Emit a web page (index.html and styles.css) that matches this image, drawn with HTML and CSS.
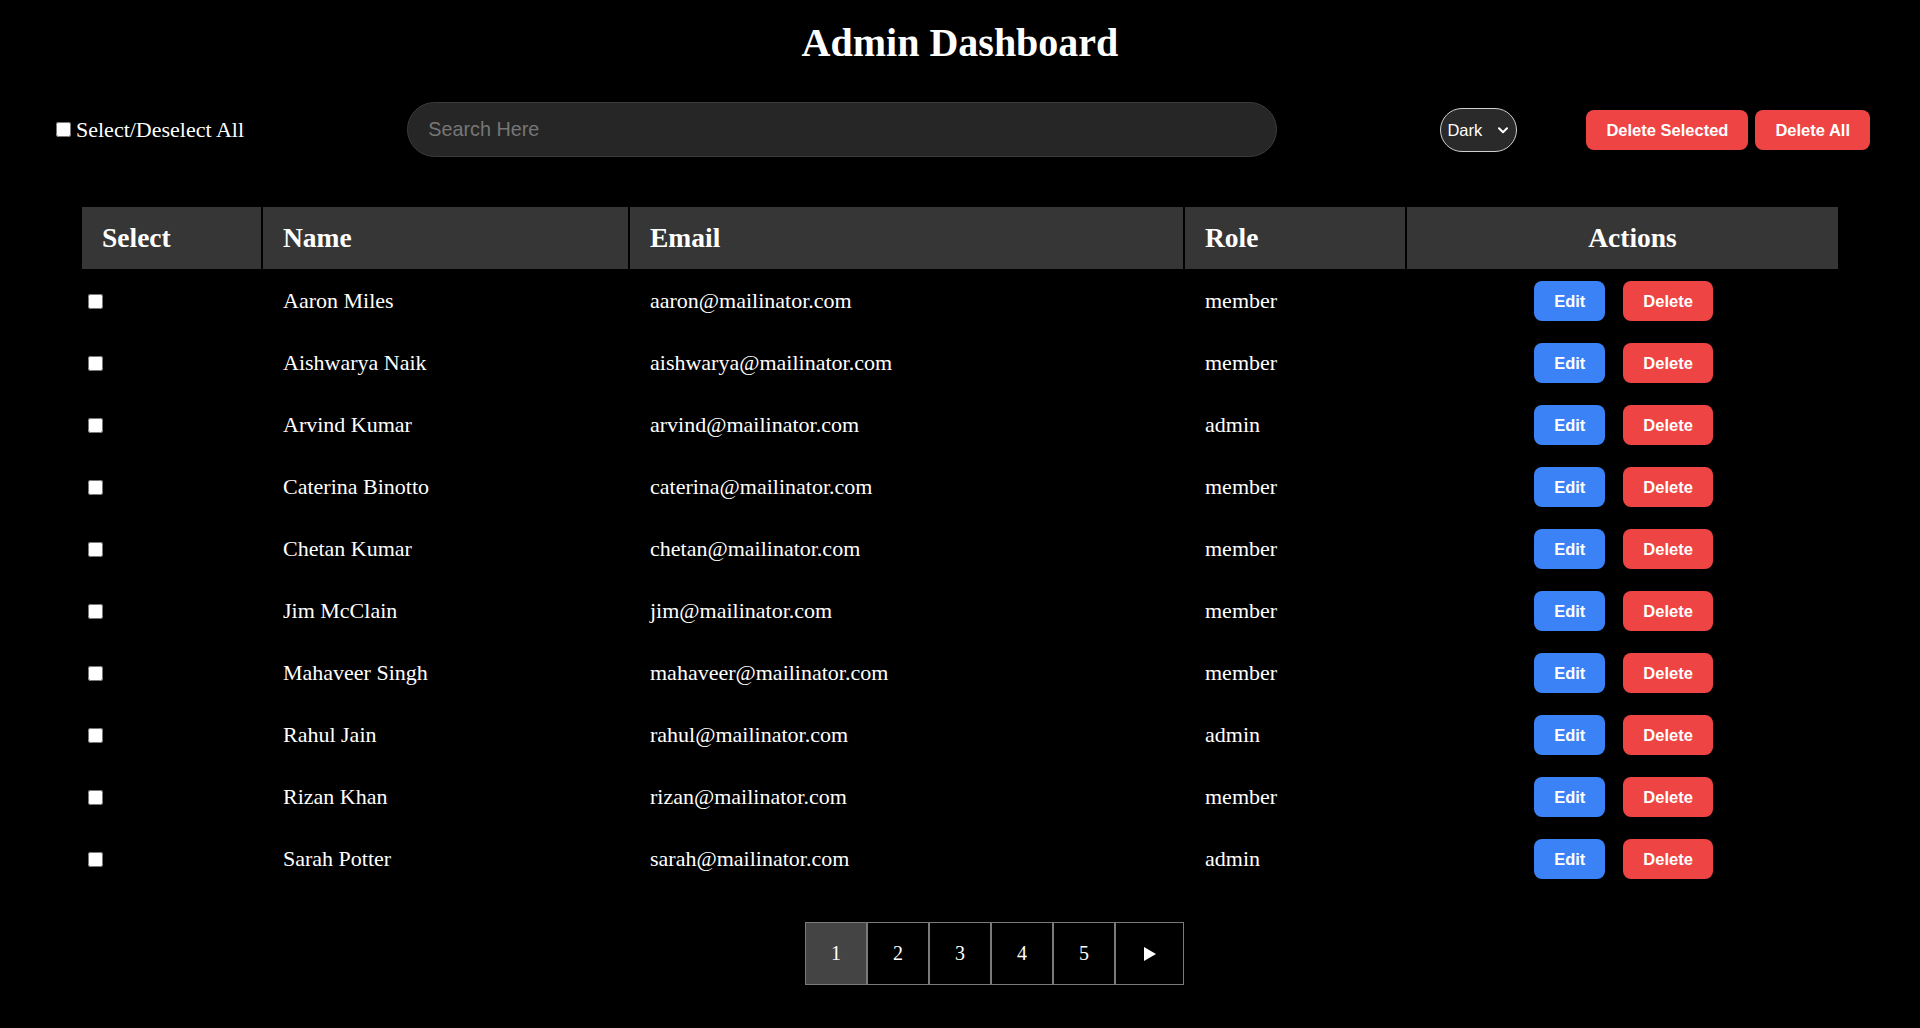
FILE: index.html
```html
<!DOCTYPE html>
<html lang="en">
<head>
<meta charset="utf-8">
<title>Admin Dashboard</title>
<link rel="stylesheet" href="styles.css">
</head>
<body>
<h1 class="title">Admin Dashboard</h1>

<div class="toolbar">
  <label class="select-all"><input type="checkbox" class="cb">Select/Deselect All</label>
  <input class="search" type="text" placeholder="Search Here">
  <div class="right-group">
    <div class="theme">
      <select class="theme-select">
        <option>Dark</option>
        <option>Light</option>
      </select>
      <svg class="chev" width="10" height="7" viewBox="0 0 10 7"><path d="M1 1.2 L5 5.2 L9 1.2" stroke="#fff" stroke-width="2" fill="none" stroke-linecap="round" stroke-linejoin="round"/></svg>
    </div>
    <div class="bulk">
      <button class="btn btn-red">Delete Selected</button>
      <button class="btn btn-red">Delete All</button>
    </div>
  </div>
</div>

<table class="users">
  <thead>
    <tr>
      <th class="col-select">Select</th>
      <th class="col-name">Name</th>
      <th class="col-email">Email</th>
      <th class="col-role">Role</th>
      <th class="col-actions">Actions</th>
    </tr>
  </thead>
  <tbody>
    <tr><td class="sel"><input type="checkbox" class="cb"></td><td>Aaron Miles</td><td>aaron@mailinator.com</td><td>member</td><td class="act"><div class="actions"><button class="btn btn-blue">Edit</button><button class="btn btn-red">Delete</button></div></td></tr>
    <tr><td class="sel"><input type="checkbox" class="cb"></td><td>Aishwarya Naik</td><td>aishwarya@mailinator.com</td><td>member</td><td class="act"><div class="actions"><button class="btn btn-blue">Edit</button><button class="btn btn-red">Delete</button></div></td></tr>
    <tr><td class="sel"><input type="checkbox" class="cb"></td><td>Arvind Kumar</td><td>arvind@mailinator.com</td><td>admin</td><td class="act"><div class="actions"><button class="btn btn-blue">Edit</button><button class="btn btn-red">Delete</button></div></td></tr>
    <tr><td class="sel"><input type="checkbox" class="cb"></td><td>Caterina Binotto</td><td>caterina@mailinator.com</td><td>member</td><td class="act"><div class="actions"><button class="btn btn-blue">Edit</button><button class="btn btn-red">Delete</button></div></td></tr>
    <tr><td class="sel"><input type="checkbox" class="cb"></td><td>Chetan Kumar</td><td>chetan@mailinator.com</td><td>member</td><td class="act"><div class="actions"><button class="btn btn-blue">Edit</button><button class="btn btn-red">Delete</button></div></td></tr>
    <tr><td class="sel"><input type="checkbox" class="cb"></td><td>Jim McClain</td><td>jim@mailinator.com</td><td>member</td><td class="act"><div class="actions"><button class="btn btn-blue">Edit</button><button class="btn btn-red">Delete</button></div></td></tr>
    <tr><td class="sel"><input type="checkbox" class="cb"></td><td>Mahaveer Singh</td><td>mahaveer@mailinator.com</td><td>member</td><td class="act"><div class="actions"><button class="btn btn-blue">Edit</button><button class="btn btn-red">Delete</button></div></td></tr>
    <tr><td class="sel"><input type="checkbox" class="cb"></td><td>Rahul Jain</td><td>rahul@mailinator.com</td><td>admin</td><td class="act"><div class="actions"><button class="btn btn-blue">Edit</button><button class="btn btn-red">Delete</button></div></td></tr>
    <tr><td class="sel"><input type="checkbox" class="cb"></td><td>Rizan Khan</td><td>rizan@mailinator.com</td><td>member</td><td class="act"><div class="actions"><button class="btn btn-blue">Edit</button><button class="btn btn-red">Delete</button></div></td></tr>
    <tr><td class="sel"><input type="checkbox" class="cb"></td><td>Sarah Potter</td><td>sarah@mailinator.com</td><td>admin</td><td class="act"><div class="actions"><button class="btn btn-blue">Edit</button><button class="btn btn-red">Delete</button></div></td></tr>
  </tbody>
</table>

<div class="pagination">
  <button class="page page-arrow page-hidden"><svg width="14" height="14" viewBox="0 0 14 14"><polygon points="13,0 13,14 1,7" fill="#fff"/></svg></button>
  <button class="page active">1</button>
  <button class="page">2</button>
  <button class="page">3</button>
  <button class="page">4</button>
  <button class="page">5</button>
  <button class="page page-arrow"><svg width="14" height="14" viewBox="0 0 14 14"><polygon points="1,0 1,14 13,7" fill="#fff"/></svg></button>
</div>
</body>
</html>
```

FILE: styles.css
```css
* {
  box-sizing: border-box;
}

html, body {
  background: #000;
}

body {
  margin: 0;
  color: #fff;
  font-family: "Liberation Serif", "Times New Roman", serif;
  font-size: 22px;
}

.title {
  margin: 0;
  padding-top: 21px;
  font-size: 40px;
  line-height: 44px;
  font-weight: bold;
  text-align: center;
}

.toolbar {
  display: flex;
  justify-content: space-between;
  align-items: center;
  margin-top: 37px;
  padding: 0 50px 0 56px;
}

.select-all {
  display: flex;
  align-items: center;
  font-size: 22px;
  line-height: 26px;
}

.cb {
  width: 15px;
  height: 15px;
  margin: 0;
}

.select-all .cb {
  margin-right: 5px;
}

.search {
  width: 870px;
  height: 55px;
  border-radius: 28px;
  border: 1px solid #3b3b3b;
  background: #262626;
  color: #fff;
  padding: 0 20px;
  font-family: "Liberation Sans", Arial, sans-serif;
  font-size: 19.8px;
  outline: none;
}

.search::placeholder {
  color: #767676;
}

.right-group {
  display: flex;
  align-items: center;
  gap: 69px;
}

.theme {
  position: relative;
  width: 77px;
  height: 44px;
}

.theme-select {
  appearance: none;
  -webkit-appearance: none;
  width: 77px;
  height: 44px;
  border-radius: 22px;
  border: 1px solid #cfcfcf;
  background: #2a2a2a;
  color: #fff;
  font-family: "Liberation Sans", Arial, sans-serif;
  font-size: 16.5px;
  padding: 0 0 0 6px;
  outline: none;
}

.chev {
  position: absolute;
  left: 58px;
  top: 19px;
  pointer-events: none;
}

.bulk {
  display: flex;
  gap: 7px;
}

.btn {
  height: 40px;
  padding: 0 20px;
  border: none;
  border-radius: 8px;
  color: #fff;
  font-family: "Liberation Sans", Arial, sans-serif;
  font-weight: bold;
  font-size: 16.5px;
  line-height: 40px;
  cursor: pointer;
}

.btn-red {
  background: #ef4444;
}

.btn-blue {
  background: #3b82f6;
}

.users {
  width: 1760px;
  margin: 48px auto 0;
  border-spacing: 2px;
  table-layout: fixed;
}

.users th {
  height: 62px;
  background: #363636;
  font-size: 27.5px;
  font-weight: bold;
  text-align: left;
  padding: 0 0 0 20px;
  vertical-align: middle;
}

.col-select { width: 179px; }
.col-name { width: 365px; }
.col-email { width: 553px; }
.col-role { width: 220px; }

.users th.col-actions {
  text-align: center;
}

.users td {
  height: 60px;
  padding: 0 0 0 20px;
  font-size: 22px;
  vertical-align: middle;
}

.users td.sel {
  padding-left: 6px;
}

.users td.sel .cb {
  display: block;
}

.actions {
  display: flex;
  justify-content: center;
}

.actions .btn {
  margin-right: 18px;
}

.pagination {
  display: flex;
  justify-content: center;
  margin-top: 31px;
}

.page {
  width: 62px;
  height: 63px;
  border: 1px solid #7a7a7a;
  background: #000;
  color: #fff;
  font-family: "Liberation Serif", "Times New Roman", serif;
  font-size: 20px;
  padding: 0;
  display: flex;
  align-items: center;
  justify-content: center;
}

.page.active {
  background: #444;
}

.page-arrow {
  width: 69px;
}

.page-hidden {
  visibility: hidden;
}
```
